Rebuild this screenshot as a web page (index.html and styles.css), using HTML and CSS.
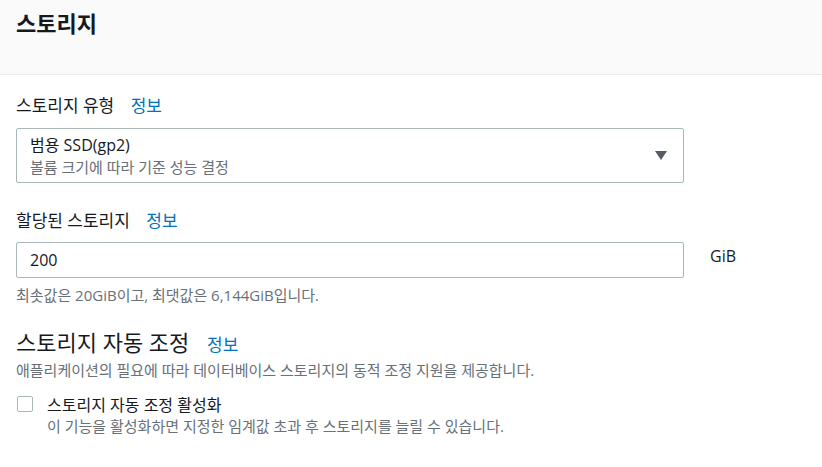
FILE: index.html
```html
<!DOCTYPE html>
<html lang="ko">
<head>
  <meta charset="UTF-8">
  <title>스토리지</title>
  <link rel="stylesheet" href="styles.css">
</head>
<body>
  <header class="panel-header">
    <h2>스토리지</h2>
  </header>

  <div class="panel-body">
    <!-- 스토리지 유형 -->
    <div class="field">
      <div class="field-label">스토리지 유형 <a class="info" href="#">정보</a></div>
      <div class="select">
        <div class="select-text">
          <div class="select-value">범용 SSD(gp2)</div>
          <div class="select-desc">볼륨 크기에 따라 기준 성능 결정</div>
        </div>
        <span class="caret"></span>
      </div>
    </div>

    <!-- 할당된 스토리지 -->
    <div class="field field-storage">
      <div class="field-label">할당된 스토리지 <a class="info" href="#">정보</a></div>
      <div class="input-row">
        <input type="text" class="text-input" value="200">
        <span class="unit">GiB</span>
      </div>
      <div class="hint">최솟값은 20GiB이고, 최댓값은 6,144GiB입니다.</div>
    </div>

    <!-- 자동 조정 -->
    <div class="section">
      <h3>스토리지 자동 조정 <a class="info" href="#">정보</a></h3>
      <div class="section-desc">애플리케이션의 필요에 따라 데이터베이스 스토리지의 동적 조정 지원을 제공합니다.</div>
      <label class="check">
        <span class="box"></span>
        <span class="check-text">
          <span class="check-title">스토리지 자동 조정 활성화</span>
          <span class="check-desc">이 기능을 활성화하면 지정한 임계값 초과 후 스토리지를 늘릴 수 있습니다.</span>
        </span>
      </label>
    </div>
  </div>
</body>
</html>
```

FILE: styles.css
```css
body {
  margin: 0;
  font-family: 'Open Sans', 'Noto Sans CJK KR', sans-serif;
  color: #16191f;
  background: #fff;
  font-size: 16px;
}

.panel-header {
  background: #fafafa;
  border-bottom: 1px solid #eaeded;
  height: 75px;
  box-sizing: border-box;
  padding: 6px 16px 0;
}

.panel-header h2 {
  margin: 0;
  font-size: 22px;
  font-weight: bold;
  line-height: 34px;
}

.panel-body {
  padding: 19px 16px 0;
}

.info {
  color: #0073bb;
  text-decoration: none;
  margin-left: 12px;
  font-size: 17px;
  font-weight: normal;
}

.field-label {
  font-size: 17px;
  line-height: 24px;
  margin-bottom: 10px;
}

.field-storage {
  margin-top: 26px;
}

.field-storage .field-label {
  margin-bottom: 9px;
}

.select {
  width: 668px;
  height: 55px;
  box-sizing: border-box;
  border: 1px solid #aab7b8;
  border-radius: 2px;
  display: flex;
  align-items: center;
  padding: 0 16px 0 13px;
}

.select-text {
  flex: 1;
}

.select-value {
  font-size: 16px;
  line-height: 20px;
}

.select-desc {
  font-size: 15px;
  line-height: 20px;
  margin-top: 2px;
  color: #687078;
}

.caret {
  width: 0;
  height: 0;
  border-left: 6.5px solid transparent;
  border-right: 6.5px solid transparent;
  border-top: 9px solid #545b64;
}

.input-row {
  display: flex;
  align-items: center;
}

.text-input {
  width: 668px;
  height: 36px;
  box-sizing: border-box;
  border: 1px solid #aab7b8;
  border-radius: 2px;
  padding: 0 13px;
  font-family: inherit;
  font-size: 16px;
  color: #16191f;
}

.unit {
  margin-left: 26px;
  margin-top: -9px;
  font-size: 16px;
  line-height: 22px;
}

.hint {
  font-size: 15px;
  color: #687078;
  margin-top: 7px;
  line-height: 20px;
}

.section {
  margin-top: 22px;
}

.section h3 {
  margin: 0;
  font-size: 22px;
  font-weight: normal;
  line-height: 30px;
}

.section-desc {
  font-size: 15px;
  color: #687078;
  line-height: 20px;
}

.check {
  display: flex;
  margin-top: 14px;
}

.box {
  width: 16px;
  height: 16px;
  box-sizing: border-box;
  border: 1px solid #aab7b8;
  border-radius: 2px;
  margin: 2px 0 0 1px;
  flex: none;
}

.check-text {
  margin-left: 14px;
  display: flex;
  flex-direction: column;
}

.check-title {
  font-size: 16px;
  line-height: 22px;
}

.check-desc {
  font-size: 15px;
  color: #687078;
  line-height: 20px;
}
```
